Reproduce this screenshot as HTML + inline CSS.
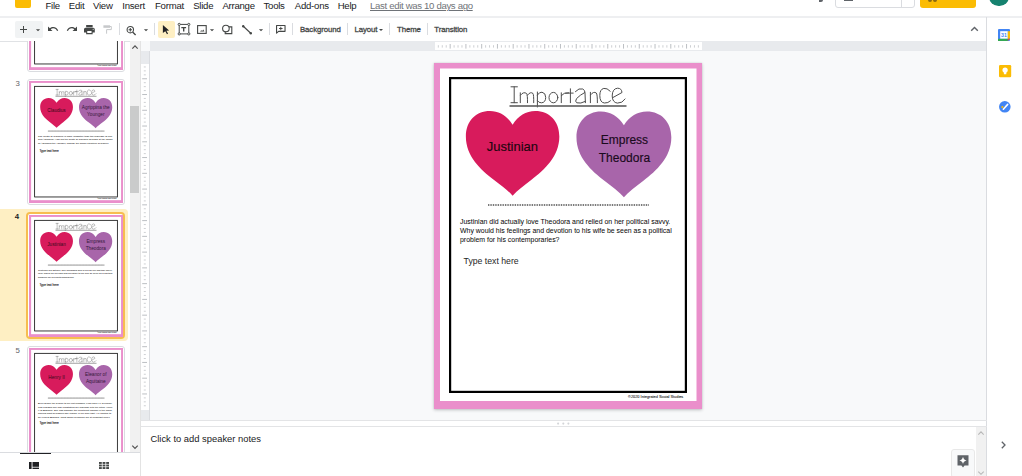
<!DOCTYPE html>
<html><head><meta charset="utf-8">
<style>
*{margin:0;padding:0;box-sizing:border-box}
html,body{width:1022px;height:476px;overflow:hidden;background:#fff;font-family:"Liberation Sans",sans-serif;position:relative}
.a{position:absolute}
.menu{position:absolute;top:1.3px;font-size:9.6px;letter-spacing:-0.25px;color:#202124;line-height:10px;white-space:nowrap}
.tb{position:absolute;font-size:7.8px;font-weight:normal;-webkit-text-stroke:0.3px #444746;color:#444746;letter-spacing:-0.1px;top:25.6px;line-height:8px;white-space:nowrap}
.sep{position:absolute;top:23px;width:1px;height:12px;background:#dadce0}
svg{position:absolute;overflow:visible}
</style></head><body>
<svg width="0" height="0" style="position:absolute;left:0;top:0">
<defs>
<path id="heart" d="M50 14.5 C44 5 36 0 26 0 C11 0 0.5 11 0.5 27 C0.5 48 16 62 30 73 C38 79.5 45 84 50 90 C55 84 62 79.5 70 73 C84 62 99.5 48 99.5 27 C99.5 11 89 0 74 0 C64 0 56 5 50 14.5 Z"/>
<g id="title" fill="none" stroke="#4d4d4d" stroke-width="1" stroke-linecap="round" stroke-linejoin="round">
<path d="M77 23.8 H83.4 M80.2 23.8 V39.7 M77 39.7 H83.4"/>
<path d="M86.3 39.7 V29.8 M86.6 32 Q89.6 28.3 92.6 30.5 Q93.6 31.5 93.5 39.7 M93.6 32 Q96.4 28.3 99 30.5 Q99.8 31.5 99.7 39.7"/>
<path d="M103.4 29 V44 M103.4 32 Q105.5 28.8 108 29.2 Q111.8 30 111.7 34.4 Q111.6 39.6 107.4 39.8 Q104.8 39.9 103.5 37.8"/>
<ellipse cx="119.4" cy="34.6" rx="4.4" ry="5.2"/>
<path d="M127.3 39.7 V29.8 M127.4 32.5 Q129.5 29.4 134.6 29.8"/>
<path d="M136.4 25.8 V39.7 M131.6 30.1 H139.2"/>
<path d="M141.4 28.6 Q145 24.6 148.8 26 Q151 27 151 30 L151.4 39.7 M150.8 29.5 Q146 32 142.6 35.5 Q140.6 38.6 142.8 39.8 Q146.5 41 151.3 38.4"/>
<path d="M156.4 39.7 V29.3 M156.6 31.8 Q159.6 28 162.3 30 Q163.4 31.2 163.4 39.7"/>
<path d="M176.2 28.2 Q173 24.8 169.8 25.4 Q165.8 26.3 165.8 32.5 Q165.8 39.6 170.5 40 Q174 40.3 176.5 37.8"/>
<path d="M178.8 34.6 L188 29.5 Q187.6 25.2 183.6 25.2 Q178.3 25.6 178.2 33 Q178.4 39.5 183.4 40.1 Q188.3 40.4 191.1 36"/>
<rect x="75.5" y="42.2" width="117" height="1.6" fill="#5e5e5e" stroke="none"/>
</g>
<g id="slidebase">
<rect x="0" y="0" width="268" height="346" fill="#ea8fcb"/>
<rect x="6" y="5.5" width="256.5" height="332.5" fill="#fff"/>
<rect x="16.1" y="15.1" width="235.8" height="313.8" fill="none" stroke="#000" stroke-width="2.2"/>
<use href="#title"/>
<use href="#heart" transform="translate(31.4 48) scale(0.944 0.942)" fill="#d81b5c"/>
<use href="#heart" transform="translate(142 48.4) scale(0.958 0.953)" fill="#a865aa"/>
<line x1="54" y1="142" x2="214.7" y2="142" stroke="#222" stroke-width="1.6" stroke-dasharray="0.8 0.9"/>
<text x="249.3" y="334.8" font-size="3.85" text-anchor="end" fill="#1a1a1a" stroke="#1a1a1a" stroke-width="0.08" font-family="Liberation Sans">©2020 Integrated Social Studies</text>
</g>
</defs>
</svg>
<!-- header -->
<div class="a" style="left:14.8px;top:-8px;width:16.5px;height:15.6px;background:#fbbc04;border-radius:2px"></div>
<div class="menu" style="left:45.5px">File</div>
<div class="menu" style="left:68.8px">Edit</div>
<div class="menu" style="left:93px">View</div>
<div class="menu" style="left:122.3px">Insert</div>
<div class="menu" style="left:155px">Format</div>
<div class="menu" style="left:193.2px">Slide</div>
<div class="menu" style="left:222.4px">Arrange</div>
<div class="menu" style="left:263.5px">Tools</div>
<div class="menu" style="left:294.8px">Add-ons</div>
<div class="menu" style="left:337.7px">Help</div>
<div class="menu" style="left:370px;color:#6f7378;text-decoration:underline;letter-spacing:-0.33px">Last edit was 10 days ago</div>

<div class="a" style="left:819px;top:-3px;width:4px;height:5px;background:#5f6368;border-radius:0 0 2px 0"></div>
<div class="a" style="left:835px;top:-5px;width:80px;height:12.5px;border:1px solid #dadce0;border-radius:3px"></div>
<div class="a" style="left:901px;top:-5px;width:1px;height:12px;background:#dadce0"></div>
<div class="a" style="left:844px;top:-2px;width:9px;height:3px;background:#5f6368"></div>
<div class="a" style="left:920px;top:-5px;width:56px;height:13px;background:#fbbc04;border-radius:3px"></div>
<div class="a" style="left:928px;top:-2.5px;width:4.3px;height:4.5px;background:#8a6a12;border-radius:0 0 2.2px 2.2px"></div><div class="a" style="left:932.8px;top:-2.5px;width:4.3px;height:4.5px;background:#8a6a12;border-radius:0 0 2.2px 2.2px"></div>
<div class="a" style="left:989.2px;top:-13.2px;width:19.6px;height:19.6px;background:#16826f;border-radius:50%"></div>

<!-- separators -->
<div class="a" style="left:0;top:16px;width:1022px;height:2px;background:#eeeff1"></div>
<div class="a" style="left:0;top:40.5px;width:986px;height:1px;background:#e0e2e5"></div>

<!-- toolbar -->
<div class="a" style="left:15px;top:21px;width:28px;height:17px;background:#f1f3f4;border-radius:2px"></div>
<div class="a" style="left:158px;top:21px;width:16.5px;height:17px;background:#feefc3;border-radius:2px"></div>
<div class="sep" style="left:119px"></div>
<div class="sep" style="left:154px"></div>
<div class="sep" style="left:269px"></div>
<div class="sep" style="left:292px"></div>
<div class="sep" style="left:347px"></div>
<div class="sep" style="left:389px"></div>
<div class="sep" style="left:427px"></div>
<div class="tb" style="left:300px">Background</div>
<div class="tb" style="left:354.6px">Layout</div>
<div class="tb" style="left:397px">Theme</div>
<div class="tb" style="left:434.3px">Transition</div>

<!-- collapse chevron -->
<svg style="left:970px;top:25px" width="9" height="8" viewBox="0 0 9 8"><path d="M1.2 5.8 L4.5 2.5 L7.8 5.8" fill="none" stroke="#5f6368" stroke-width="1.4"/></svg>

<!-- right panel -->
<div class="a" style="left:986px;top:17px;width:1px;height:459px;background:#dadce0"></div>

<!-- rulers & canvas -->
<div class="a" style="left:149px;top:41px;width:837px;height:10px;background:#e8eaed"></div>
<div class="a" style="left:435px;top:42px;width:267px;height:8.3px;background:#fff"></div>
<div class="a" style="left:140.5px;top:41px;width:9px;height:380px;background:#e8eaed"></div>
<div class="a" style="left:140.5px;top:41px;width:9px;height:9.5px;background:#f8f9fa"></div>
<div class="a" style="left:141px;top:63.5px;width:8px;height:346px;background:#fff"></div>
<div class="a" style="left:149px;top:51px;width:837px;height:369.5px;background:#f8f9fa;border-left:1px solid #dadce0"></div>
<div class="a" style="left:140.5px;top:420px;width:846px;height:1px;background:#e3e4e6"></div>
<div class="a" style="left:140.5px;top:426px;width:846px;height:1px;background:#e3e4e6"></div>

<!-- filmstrip -->
<div class="a" style="left:0;top:41px;width:130px;height:411px;overflow:hidden"><div class="a" style="left:0;top:-41px;width:130px;height:476px">
<div class="a" style="left:27px;top:-54.5px;width:98px;height:126px;border:1px solid #dadce0;border-radius:3px;background:#fff"></div>
<div class="a" style="left:15.5px;top:-54.1px;font-size:7.8px;color:#5f6368;line-height:9px">2</div>
<svg style="left:28.6px;top:-52.5px" width="94" height="122" viewBox="0 0 268 346" preserveAspectRatio="none"><use href="#slidebase"/><rect x="54" y="140.8" width="160.7" height="2.4" fill="#fff"/><rect x="54" y="141" width="160.7" height="2" fill="#888"/><g font-family="Liberation Sans" fill="#3a0a1a" font-size="13.5" text-anchor="middle"></g><g font-family="Liberation Sans" font-size="7" fill="#3a3a3a" stroke="#3a3a3a" stroke-width="0.1"></g></svg>
<div class="a" style="left:27px;top:79px;width:98px;height:126px;border:1px solid #dadce0;border-radius:3px;background:#fff"></div>
<div class="a" style="left:15.5px;top:79.4px;font-size:7.8px;color:#5f6368;line-height:9px">3</div>
<svg style="left:28.6px;top:81px" width="94" height="122" viewBox="0 0 268 346" preserveAspectRatio="none"><use href="#slidebase"/><rect x="54" y="140.8" width="160.7" height="2.4" fill="#fff"/><rect x="54" y="141" width="160.7" height="2" fill="#888"/><g font-family="Liberation Sans" fill="#3a0a1a" font-size="13.5" text-anchor="middle"><text x="78.4" y="88.5">Claudius</text><text x="190.4" y="78.5" fill="#35183a">Agrippina the</text><text x="190.4" y="98.5" fill="#35183a">Younger</text></g><g font-family="Liberation Sans" font-size="7" fill="#3a3a3a" stroke="#3a3a3a" stroke-width="0.1"><text x="26" y="159.5" textLength="211.2" lengthAdjust="spacingAndGlyphs">The death of Claudius is more impactful than the marriage of him</text><text x="26" y="168.5" textLength="212" lengthAdjust="spacingAndGlyphs">and Agrippina. How did the death of Claudius perhaps at the hands</text><text x="26" y="177.5" textLength="201.29999999999998" lengthAdjust="spacingAndGlyphs">of Agrippina the Younger, change the power structure of Rome?</text></g><text x="29.6" y="201.5" font-family="Liberation Sans" font-size="8.7" fill="#222" stroke="#222" stroke-width="0.3">Type text here</text></svg>
<div class="a" style="left:0;top:209.0px;width:128px;height:132px;background:#feefc3;border-radius:0 4px 4px 0"></div>
<div class="a" style="left:26px;top:212.0px;width:99px;height:127px;border:2px solid #f7bd4f;border-radius:4px;background:#fff"></div>
<div class="a" style="left:14.8px;top:211.9px;font-size:7.8px;font-weight:bold;color:#202124;line-height:9px">4</div>
<svg style="left:28.6px;top:214.5px" width="94" height="122" viewBox="0 0 268 346" preserveAspectRatio="none"><use href="#slidebase"/><rect x="54" y="140.8" width="160.7" height="2.4" fill="#fff"/><rect x="54" y="141" width="160.7" height="2" fill="#888"/><g font-family="Liberation Sans" fill="#3a0a1a" font-size="13.5" text-anchor="middle"><text x="78.4" y="88.5">Justinian</text><text x="190.4" y="78.5" fill="#35183a">Empress</text><text x="190.4" y="98.5" fill="#35183a">Theodora</text></g><g font-family="Liberation Sans" font-size="7" fill="#3a3a3a" stroke="#3a3a3a" stroke-width="0.1"><text x="26" y="159.5" textLength="212" lengthAdjust="spacingAndGlyphs">Justinian did actually love Theodora and relied on her political savvy.</text><text x="26" y="168.5" textLength="212" lengthAdjust="spacingAndGlyphs">Why would his feelings and devotion to his wife be seen as a political</text><text x="26" y="177.5" textLength="102.3" lengthAdjust="spacingAndGlyphs">problem for his contemporaries?</text></g><text x="29.6" y="200" font-family="Liberation Sans" font-size="8.7" fill="#222" stroke="#222" stroke-width="0.3">Type text here</text></svg>
<div class="a" style="left:27px;top:346px;width:98px;height:126px;border:1px solid #dadce0;border-radius:3px;background:#fff"></div>
<div class="a" style="left:15.5px;top:346.4px;font-size:7.8px;color:#5f6368;line-height:9px">5</div>
<svg style="left:28.6px;top:348px" width="94" height="122" viewBox="0 0 268 346" preserveAspectRatio="none"><use href="#slidebase"/><rect x="54" y="140.8" width="160.7" height="2.4" fill="#fff"/><rect x="54" y="141" width="160.7" height="2" fill="#888"/><g font-family="Liberation Sans" fill="#3a0a1a" font-size="13.5" text-anchor="middle"><text x="78.4" y="88.5">Henry II</text><text x="190.4" y="78.5" fill="#35183a">Eleanor of</text><text x="190.4" y="98.5" fill="#35183a">Aquitaine</text></g><g font-family="Liberation Sans" font-size="7" fill="#3a3a3a" stroke="#3a3a3a" stroke-width="0.1"><text x="26" y="159.5" textLength="212" lengthAdjust="spacingAndGlyphs">Even before the divorce to her first husband, King Louis VII of France,</text><text x="26" y="169.0" textLength="212" lengthAdjust="spacingAndGlyphs">was finalized she was negotiating her marriage with the future Henry</text><text x="26" y="178.5" textLength="212" lengthAdjust="spacingAndGlyphs">II of England. She was possibly the wealthiest woman in the world,</text><text x="26" y="188.0" textLength="207.89999999999998" lengthAdjust="spacingAndGlyphs">owning most of modern day France in her own right. He wanted to</text><text x="26" y="197.5" textLength="204.6" lengthAdjust="spacingAndGlyphs">be King of England. What power dynamics are at important here?</text></g><text x="29.6" y="215" font-family="Liberation Sans" font-size="8.7" fill="#222" stroke="#222" stroke-width="0.3">Type text here</text></svg>
</div></div>
<div class="a" style="left:140px;top:41px;width:1px;height:435px;background:#e3e3e3"></div>
<div class="a" style="left:130px;top:41px;width:10px;height:411px;background:#f1f1f1"></div>
<div class="a" style="left:130px;top:106px;width:8.7px;height:86.5px;background:#cacbcb"></div>
<div class="a" style="left:0;top:452px;width:140px;height:1px;background:#dadce0"></div>
<div class="a" style="left:20px;top:452.6px;width:30.5px;height:1.7px;background:#202124"></div>
<!-- main slide -->
<div class="a" style="left:434px;top:63px;width:268px;height:346px;box-shadow:0 1px 3px 0 rgba(60,64,67,.3),0 0 1px rgba(60,64,67,.2)"></div>
<svg style="left:434px;top:63px" width="268" height="346" viewBox="0 0 268 346">
<use href="#slidebase"/>
<g font-family="Liberation Sans">
<text x="78.4" y="88.3" font-size="13" text-anchor="middle" fill="#1e0610" stroke="#1e0610" stroke-width="0.15">Justinian</text>
<text x="190.4" y="80.5" font-size="12" text-anchor="middle" fill="#1a0a1c" stroke="#1a0a1c" stroke-width="0.15">Empress</text>
<text x="190.4" y="98.5" font-size="12" text-anchor="middle" fill="#1a0a1c" stroke="#1a0a1c" stroke-width="0.15">Theodora</text>
</g>
<g font-family="Liberation Sans" font-size="6.95" fill="#0d0d0d" stroke="#0d0d0d" stroke-width="0.04">
<text x="26" y="160.8">Justinian did actually love Theodora and relied on her political savvy.</text>
<text x="26" y="169.8">Why would his feelings and devotion to his wife be seen as a political</text>
<text x="26" y="178.8">problem for his contemporaries?</text>
</g>
<text x="29.6" y="200.8" font-family="Liberation Sans" font-size="8.7" fill="#262626">Type text here</text>
</svg>
<!-- speaker notes -->
<div class="a" style="left:150.5px;top:434px;font-size:9.4px;color:#202124;white-space:nowrap;line-height:10px">Click to add speaker notes</div>
<!-- toolbar icons -->
<div class="a" style="left:20px;top:29px;width:7px;height:1.1px;background:#444746"></div><div class="a" style="left:23px;top:26px;width:1.1px;height:7px;background:#444746"></div>
<svg style="left:33px;top:25px" width="10" height="10" viewBox="0 0 24 24"><path d="M7 10l5 5 5-5z" fill="#444746"/></svg>
<svg style="left:47px;top:23px" width="12" height="12" viewBox="0 0 24 24"><path d="M12.5 8c-2.65 0-5.05.99-6.9 2.6L2 7v9h9l-3.62-3.62c1.39-1.16 3.16-1.88 5.12-1.88 3.54 0 6.55 2.31 7.6 5.5l2.37-.78C21.08 11.03 17.15 8 12.5 8z" fill="#444746"/></svg>
<svg style="left:65.5px;top:23px" width="12" height="12" viewBox="0 0 24 24"><path d="M18.4 10.6C16.55 8.99 14.15 8 11.5 8c-4.65 0-8.58 3.03-9.96 7.22L3.9 16c1.05-3.19 4.05-5.5 7.6-5.5 1.95 0 3.73.72 5.12 1.88L13 16h9V7l-3.6 3.6z" fill="#444746"/></svg>
<svg style="left:84px;top:24.8px" width="10.8" height="9.2" viewBox="2 3 20 17"><path d="M19 8H5c-1.66 0-3 1.34-3 3v6h4v3h12v-3h4v-6c0-1.66-1.34-3-3-3zm-3 10H8v-4h8v4zm3-6c-.55 0-1-.45-1-1s.45-1 1-1 1 .45 1 1-.45 1-1 1zm-1-9H6v4h12V3z" fill="#444746"/></svg>
<svg style="left:0;top:0" width="1" height="1" viewBox="0 0 1 1"><rect x="103.4" y="25.3" width="6.6" height="2.5" fill="#c6c8ca"/><path d="M110 26.5 H111.3 V29.6 H106.6 V33.7" fill="none" stroke="#c6c8ca" stroke-width="1"/></svg>
<svg style="left:126px;top:25.5px" width="11" height="9" viewBox="0 0 11 9"><g fill="none" stroke="#444746" stroke-width="1.1"><circle cx="4.3" cy="3.7" r="3.2"/><path d="M6.6 6 L9.6 9" stroke-width="1.4"/><path d="M4.3 2 V5.4 M2.6 3.7 H6"/></g></svg>
<svg style="left:141px;top:25px" width="10" height="10" viewBox="0 0 24 24"><path d="M7 10l5 5 5-5z" fill="#444746"/></svg>
<svg style="left:161px;top:24.3px" width="10" height="10" viewBox="0 0 24 24"><path d="M4.5 2.5 L19.5 15.5 L12.8 15.9 L17 23 L14.4 24.3 L10.3 17.2 L4.5 21.8 Z" fill="#202124"/></svg>
<svg style="left:0;top:0" width="1" height="1" viewBox="0 0 1 1"><rect x="179.2" y="24.4" width="9.6" height="9.5" fill="none" stroke="#444746" stroke-width="1"/><g fill="#fff" stroke="#444746" stroke-width="0.9"><circle cx="179.2" cy="24.4" r="1.1"/><circle cx="188.8" cy="24.4" r="1.1"/><circle cx="179.2" cy="33.9" r="1.1"/><circle cx="188.8" cy="33.9" r="1.1"/></g><path d="M181.3 27.1h4.8v1.1h-1.7v3.4h-1.4v-3.4h-1.7z" fill="#444746"/></svg>
<svg style="left:196.5px;top:25px" width="10" height="9" viewBox="0 0 10 9"><rect x="0.6" y="0.6" width="8.6" height="7.8" fill="none" stroke="#444746" stroke-width="1.1"/><path d="M3 6.6 L4.3 5.2 L5.2 6 L6.3 4.6 L7.4 6.6Z" fill="#444746"/></svg>
<svg style="left:207px;top:25px" width="10" height="10" viewBox="0 0 24 24"><path d="M7 10l5 5 5-5z" fill="#444746"/></svg>
<svg style="left:0;top:0" width="1" height="1" viewBox="0 0 1 1"><g stroke="#444746" stroke-width="1.1" fill="none"><path d="M228.8 26.9 H231.8 V33.6 H225.2 V31.6"/><circle cx="225.9" cy="28.6" r="3.3"/></g></svg>
<svg style="left:241.5px;top:24.5px" width="10" height="9.5" viewBox="0 0 10 9.5"><g fill="#444746"><path d="M1 1 L9 8.5" stroke="#444746" stroke-width="1.1"/><circle cx="1.2" cy="1.2" r="1.2"/><circle cx="8.8" cy="8.3" r="1.2"/></g></svg>
<svg style="left:256px;top:25px" width="10" height="10" viewBox="0 0 24 24"><path d="M7 10l5 5 5-5z" fill="#444746"/></svg>
<svg style="left:276.3px;top:25.2px" width="9.6" height="8.5" viewBox="0 0 9.6 8.5"><path d="M0.55 0.55h8.5v5.8H2.6L0.55 8.1z" fill="none" stroke="#444746" stroke-width="1.1" stroke-linejoin="round"/><path d="M4.35 1.8h0.9v1.3h1.3v0.9H5.25v1.3h-0.9V4H3.05V3.1h1.3z" fill="#444746"/></svg>
<svg style="left:376.8px;top:25.8px" width="8" height="8" viewBox="0 0 24 24"><path d="M6 9l6 6 6-6z" fill="#444746"/></svg>
<!-- filmstrip scroll arrows -->
<svg style="left:131px;top:44px" width="8" height="6" viewBox="0 0 8 6"><path d="M1.3 4.6 L4 1.9 L6.7 4.6" fill="none" stroke="#505050" stroke-width="1.2"/></svg>
<svg style="left:131px;top:444px" width="8" height="6" viewBox="0 0 8 6"><path d="M1.3 1.6 L4 4.3 L6.7 1.6" fill="none" stroke="#505050" stroke-width="1.2"/></svg>
<!-- bottom view tabs -->
<svg style="left:29px;top:461.8px" width="10" height="7" viewBox="0 0 10 7"><g fill="#202124"><rect x="0" y="0" width="2.6" height="7"/><rect x="3.5" y="0" width="6.5" height="4.8"/><rect x="3.5" y="5.6" width="6.5" height="1.4"/></g></svg>
<svg style="left:98.5px;top:461.8px" width="10" height="7" viewBox="0 0 10 7"><g fill="#444746"><rect x="0" y="0" width="2.8" height="1.9"/><rect x="3.6" y="0" width="2.8" height="1.9"/><rect x="7.2" y="0" width="2.8" height="1.9"/><rect x="0" y="2.55" width="2.8" height="1.9"/><rect x="3.6" y="2.55" width="2.8" height="1.9"/><rect x="7.2" y="2.55" width="2.8" height="1.9"/><rect x="0" y="5.1" width="2.8" height="1.9"/><rect x="3.6" y="5.1" width="2.8" height="1.9"/><rect x="7.2" y="5.1" width="2.8" height="1.9"/></g></svg>
<!-- notes chrome -->
<div class="a" style="left:976px;top:427px;width:10px;height:49px;background:#f1f1f1"></div>
<svg style="left:977px;top:429.5px" width="8" height="6" viewBox="0 0 8 6"><path d="M1.3 4.6 L4 1.9 L6.7 4.6" fill="none" stroke="#b8b8b8" stroke-width="1.1"/></svg>
<svg style="left:977px;top:470px" width="8" height="6" viewBox="0 0 8 6"><path d="M1.3 1.6 L4 4.3 L6.7 1.6" fill="none" stroke="#b8b8b8" stroke-width="1.1"/></svg>
<div class="a" style="left:950.8px;top:448.8px;width:24px;height:29px;background:#f8f9fa;border:1px solid #e8e8e8;border-radius:3px"></div>
<svg style="left:957.3px;top:455px" width="12" height="13" viewBox="0 0 12 13"><path d="M0.5 0.3h11v10.2H7.6L6 12.6 4.4 10.5H0.5z" fill="#5f6368"/><path d="M6 1.8 Q6.5 4.8 9.6 5.4 Q6.5 6 6 9 Q5.5 6 2.4 5.4 Q5.5 4.8 6 1.8z" fill="#fff"/></svg>
<svg style="left:1000.4px;top:441px" width="7" height="8" viewBox="0 0 7 8"><path d="M1.8 0.8 L5 4 L1.8 7.2" fill="none" stroke="#5f6368" stroke-width="1.3"/></svg>
<!-- canvas resize dots -->
<svg style="left:0;top:0" width="1" height="1" viewBox="0 0 1 1"><g fill="#d3d5d8"><circle cx="558.1" cy="423.6" r="1.05"/><circle cx="563.3" cy="423.6" r="1.05"/><circle cx="568.4" cy="423.6" r="1.05"/></g></svg>
<!-- right panel icons -->
<svg style="left:998.2px;top:28.6px" width="12" height="12" viewBox="0 0 12 12">
<rect x="0" y="0" width="12" height="12" rx="1" fill="#4285f4"/>
<rect x="2.2" y="2.2" width="7.6" height="7.6" fill="#fff"/>
<rect x="9.8" y="2.2" width="2.2" height="7.6" fill="#fbbc04"/>
<rect x="0" y="9.8" width="9.8" height="2.2" fill="#34a853"/>
<path d="M9.8 9.8h2.2L9.8 12z" fill="#ea4335"/>
<text x="6" y="8" font-size="5.2" text-anchor="middle" fill="#4285f4" font-family="Liberation Sans" font-weight="bold">31</text>
</svg>
<svg style="left:998.7px;top:64.6px" width="12.2" height="12.2" viewBox="0 0 12 12">
<rect x="0" y="0" width="12" height="12" rx="1.2" fill="#fbbc04"/>
<circle cx="6" cy="5" r="2.6" fill="#fff"/><rect x="4.8" y="6.5" width="2.4" height="2.6" fill="#fff"/>
</svg>
<svg style="left:999px;top:101px" width="11.6" height="11.6" viewBox="0 0 12 12">
<circle cx="6" cy="6" r="6" fill="#4285f4"/>
<path d="M4.5 8.5 L9 3.5" stroke="#fff" stroke-width="1.6" stroke-linecap="round"/>
<circle cx="3.5" cy="6.3" r="1.1" fill="#fbbc04"/>
</svg>
<!-- header partial icons -->
<div class="a" style="left:998.3px;top:-1px;width:1.6px;height:1.4px;border-radius:1px;background:#fff;opacity:.85"></div>
<div class="a" style="left:1001.3px;top:-1px;width:1.6px;height:1.4px;border-radius:1px;background:#fff;opacity:.85"></div>
<div class="a" style="left:995.3px;top:-1px;width:1.6px;height:1.4px;border-radius:1px;background:#fff;opacity:.85"></div>
<!-- rulers ticks -->
<svg style="left:0;top:0" width="1022" height="476" viewBox="0 0 1022 476"><g stroke="#b4b8bc" stroke-width="0.9"><line x1="438.34" y1="45.2" x2="438.34" y2="47.6" stroke="#c8cbce"/><line x1="442.28" y1="45.2" x2="442.28" y2="47.6" stroke="#c8cbce"/><line x1="446.22" y1="45.2" x2="446.22" y2="47.6" stroke="#c8cbce"/><line x1="450.16" y1="44" x2="450.16" y2="48.6"/><line x1="454.10" y1="45.2" x2="454.10" y2="47.6" stroke="#c8cbce"/><line x1="458.04" y1="45.2" x2="458.04" y2="47.6" stroke="#c8cbce"/><line x1="461.98" y1="45.2" x2="461.98" y2="47.6" stroke="#c8cbce"/><line x1="465.92" y1="44" x2="465.92" y2="48.6"/><line x1="469.86" y1="45.2" x2="469.86" y2="47.6" stroke="#c8cbce"/><line x1="473.80" y1="45.2" x2="473.80" y2="47.6" stroke="#c8cbce"/><line x1="477.74" y1="45.2" x2="477.74" y2="47.6" stroke="#c8cbce"/><line x1="481.68" y1="44" x2="481.68" y2="48.6"/><line x1="485.62" y1="45.2" x2="485.62" y2="47.6" stroke="#c8cbce"/><line x1="489.56" y1="45.2" x2="489.56" y2="47.6" stroke="#c8cbce"/><line x1="493.50" y1="45.2" x2="493.50" y2="47.6" stroke="#c8cbce"/><line x1="497.44" y1="44" x2="497.44" y2="48.6"/><line x1="501.38" y1="45.2" x2="501.38" y2="47.6" stroke="#c8cbce"/><line x1="505.32" y1="45.2" x2="505.32" y2="47.6" stroke="#c8cbce"/><line x1="509.26" y1="45.2" x2="509.26" y2="47.6" stroke="#c8cbce"/><line x1="513.20" y1="44" x2="513.20" y2="48.6"/><line x1="517.14" y1="45.2" x2="517.14" y2="47.6" stroke="#c8cbce"/><line x1="521.08" y1="45.2" x2="521.08" y2="47.6" stroke="#c8cbce"/><line x1="525.02" y1="45.2" x2="525.02" y2="47.6" stroke="#c8cbce"/><line x1="528.96" y1="44" x2="528.96" y2="48.6"/><line x1="532.90" y1="45.2" x2="532.90" y2="47.6" stroke="#c8cbce"/><line x1="536.84" y1="45.2" x2="536.84" y2="47.6" stroke="#c8cbce"/><line x1="540.78" y1="45.2" x2="540.78" y2="47.6" stroke="#c8cbce"/><line x1="544.72" y1="44" x2="544.72" y2="48.6"/><line x1="548.66" y1="45.2" x2="548.66" y2="47.6" stroke="#c8cbce"/><line x1="552.60" y1="45.2" x2="552.60" y2="47.6" stroke="#c8cbce"/><line x1="556.54" y1="45.2" x2="556.54" y2="47.6" stroke="#c8cbce"/><line x1="560.48" y1="44" x2="560.48" y2="48.6"/><line x1="564.42" y1="45.2" x2="564.42" y2="47.6" stroke="#c8cbce"/><line x1="568.36" y1="45.2" x2="568.36" y2="47.6" stroke="#c8cbce"/><line x1="572.30" y1="45.2" x2="572.30" y2="47.6" stroke="#c8cbce"/><line x1="576.24" y1="44" x2="576.24" y2="48.6"/><line x1="580.18" y1="45.2" x2="580.18" y2="47.6" stroke="#c8cbce"/><line x1="584.12" y1="45.2" x2="584.12" y2="47.6" stroke="#c8cbce"/><line x1="588.06" y1="45.2" x2="588.06" y2="47.6" stroke="#c8cbce"/><line x1="592.00" y1="44" x2="592.00" y2="48.6"/><line x1="595.94" y1="45.2" x2="595.94" y2="47.6" stroke="#c8cbce"/><line x1="599.88" y1="45.2" x2="599.88" y2="47.6" stroke="#c8cbce"/><line x1="603.82" y1="45.2" x2="603.82" y2="47.6" stroke="#c8cbce"/><line x1="607.76" y1="44" x2="607.76" y2="48.6"/><line x1="611.70" y1="45.2" x2="611.70" y2="47.6" stroke="#c8cbce"/><line x1="615.64" y1="45.2" x2="615.64" y2="47.6" stroke="#c8cbce"/><line x1="619.58" y1="45.2" x2="619.58" y2="47.6" stroke="#c8cbce"/><line x1="623.52" y1="44" x2="623.52" y2="48.6"/><line x1="627.46" y1="45.2" x2="627.46" y2="47.6" stroke="#c8cbce"/><line x1="631.40" y1="45.2" x2="631.40" y2="47.6" stroke="#c8cbce"/><line x1="635.34" y1="45.2" x2="635.34" y2="47.6" stroke="#c8cbce"/><line x1="639.28" y1="44" x2="639.28" y2="48.6"/><line x1="643.22" y1="45.2" x2="643.22" y2="47.6" stroke="#c8cbce"/><line x1="647.16" y1="45.2" x2="647.16" y2="47.6" stroke="#c8cbce"/><line x1="651.10" y1="45.2" x2="651.10" y2="47.6" stroke="#c8cbce"/><line x1="655.04" y1="44" x2="655.04" y2="48.6"/><line x1="658.98" y1="45.2" x2="658.98" y2="47.6" stroke="#c8cbce"/><line x1="662.92" y1="45.2" x2="662.92" y2="47.6" stroke="#c8cbce"/><line x1="666.86" y1="45.2" x2="666.86" y2="47.6" stroke="#c8cbce"/><line x1="670.80" y1="44" x2="670.80" y2="48.6"/><line x1="674.74" y1="45.2" x2="674.74" y2="47.6" stroke="#c8cbce"/><line x1="678.68" y1="45.2" x2="678.68" y2="47.6" stroke="#c8cbce"/><line x1="682.62" y1="45.2" x2="682.62" y2="47.6" stroke="#c8cbce"/><line x1="686.56" y1="44" x2="686.56" y2="48.6"/><line x1="690.50" y1="45.2" x2="690.50" y2="47.6" stroke="#c8cbce"/><line x1="694.44" y1="45.2" x2="694.44" y2="47.6" stroke="#c8cbce"/><line x1="698.38" y1="45.2" x2="698.38" y2="47.6" stroke="#c8cbce"/><line x1="143.8" y1="66.94" x2="145.8" y2="66.94" stroke="#c8cbce"/><line x1="143.8" y1="70.88" x2="145.8" y2="70.88" stroke="#c8cbce"/><line x1="143.8" y1="74.82" x2="145.8" y2="74.82" stroke="#c8cbce"/><line x1="142.2" y1="78.76" x2="147" y2="78.76"/><line x1="143.8" y1="82.70" x2="145.8" y2="82.70" stroke="#c8cbce"/><line x1="143.8" y1="86.64" x2="145.8" y2="86.64" stroke="#c8cbce"/><line x1="143.8" y1="90.58" x2="145.8" y2="90.58" stroke="#c8cbce"/><line x1="142.2" y1="94.52" x2="147" y2="94.52"/><line x1="143.8" y1="98.46" x2="145.8" y2="98.46" stroke="#c8cbce"/><line x1="143.8" y1="102.40" x2="145.8" y2="102.40" stroke="#c8cbce"/><line x1="143.8" y1="106.34" x2="145.8" y2="106.34" stroke="#c8cbce"/><line x1="142.2" y1="110.28" x2="147" y2="110.28"/><line x1="143.8" y1="114.22" x2="145.8" y2="114.22" stroke="#c8cbce"/><line x1="143.8" y1="118.16" x2="145.8" y2="118.16" stroke="#c8cbce"/><line x1="143.8" y1="122.10" x2="145.8" y2="122.10" stroke="#c8cbce"/><line x1="142.2" y1="126.04" x2="147" y2="126.04"/><line x1="143.8" y1="129.98" x2="145.8" y2="129.98" stroke="#c8cbce"/><line x1="143.8" y1="133.92" x2="145.8" y2="133.92" stroke="#c8cbce"/><line x1="143.8" y1="137.86" x2="145.8" y2="137.86" stroke="#c8cbce"/><line x1="142.2" y1="141.80" x2="147" y2="141.80"/><line x1="143.8" y1="145.74" x2="145.8" y2="145.74" stroke="#c8cbce"/><line x1="143.8" y1="149.68" x2="145.8" y2="149.68" stroke="#c8cbce"/><line x1="143.8" y1="153.62" x2="145.8" y2="153.62" stroke="#c8cbce"/><line x1="142.2" y1="157.56" x2="147" y2="157.56"/><line x1="143.8" y1="161.50" x2="145.8" y2="161.50" stroke="#c8cbce"/><line x1="143.8" y1="165.44" x2="145.8" y2="165.44" stroke="#c8cbce"/><line x1="143.8" y1="169.38" x2="145.8" y2="169.38" stroke="#c8cbce"/><line x1="142.2" y1="173.32" x2="147" y2="173.32"/><line x1="143.8" y1="177.26" x2="145.8" y2="177.26" stroke="#c8cbce"/><line x1="143.8" y1="181.20" x2="145.8" y2="181.20" stroke="#c8cbce"/><line x1="143.8" y1="185.14" x2="145.8" y2="185.14" stroke="#c8cbce"/><line x1="142.2" y1="189.08" x2="147" y2="189.08"/><line x1="143.8" y1="193.02" x2="145.8" y2="193.02" stroke="#c8cbce"/><line x1="143.8" y1="196.96" x2="145.8" y2="196.96" stroke="#c8cbce"/><line x1="143.8" y1="200.90" x2="145.8" y2="200.90" stroke="#c8cbce"/><line x1="142.2" y1="204.84" x2="147" y2="204.84"/><line x1="143.8" y1="208.78" x2="145.8" y2="208.78" stroke="#c8cbce"/><line x1="143.8" y1="212.72" x2="145.8" y2="212.72" stroke="#c8cbce"/><line x1="143.8" y1="216.66" x2="145.8" y2="216.66" stroke="#c8cbce"/><line x1="142.2" y1="220.60" x2="147" y2="220.60"/><line x1="143.8" y1="224.54" x2="145.8" y2="224.54" stroke="#c8cbce"/><line x1="143.8" y1="228.48" x2="145.8" y2="228.48" stroke="#c8cbce"/><line x1="143.8" y1="232.42" x2="145.8" y2="232.42" stroke="#c8cbce"/><line x1="142.2" y1="236.36" x2="147" y2="236.36"/><line x1="143.8" y1="240.30" x2="145.8" y2="240.30" stroke="#c8cbce"/><line x1="143.8" y1="244.24" x2="145.8" y2="244.24" stroke="#c8cbce"/><line x1="143.8" y1="248.18" x2="145.8" y2="248.18" stroke="#c8cbce"/><line x1="142.2" y1="252.12" x2="147" y2="252.12"/><line x1="143.8" y1="256.06" x2="145.8" y2="256.06" stroke="#c8cbce"/><line x1="143.8" y1="260.00" x2="145.8" y2="260.00" stroke="#c8cbce"/><line x1="143.8" y1="263.94" x2="145.8" y2="263.94" stroke="#c8cbce"/><line x1="142.2" y1="267.88" x2="147" y2="267.88"/><line x1="143.8" y1="271.82" x2="145.8" y2="271.82" stroke="#c8cbce"/><line x1="143.8" y1="275.76" x2="145.8" y2="275.76" stroke="#c8cbce"/><line x1="143.8" y1="279.70" x2="145.8" y2="279.70" stroke="#c8cbce"/><line x1="142.2" y1="283.64" x2="147" y2="283.64"/><line x1="143.8" y1="287.58" x2="145.8" y2="287.58" stroke="#c8cbce"/><line x1="143.8" y1="291.52" x2="145.8" y2="291.52" stroke="#c8cbce"/><line x1="143.8" y1="295.46" x2="145.8" y2="295.46" stroke="#c8cbce"/><line x1="142.2" y1="299.40" x2="147" y2="299.40"/><line x1="143.8" y1="303.34" x2="145.8" y2="303.34" stroke="#c8cbce"/><line x1="143.8" y1="307.28" x2="145.8" y2="307.28" stroke="#c8cbce"/><line x1="143.8" y1="311.22" x2="145.8" y2="311.22" stroke="#c8cbce"/><line x1="142.2" y1="315.16" x2="147" y2="315.16"/><line x1="143.8" y1="319.10" x2="145.8" y2="319.10" stroke="#c8cbce"/><line x1="143.8" y1="323.04" x2="145.8" y2="323.04" stroke="#c8cbce"/><line x1="143.8" y1="326.98" x2="145.8" y2="326.98" stroke="#c8cbce"/><line x1="142.2" y1="330.92" x2="147" y2="330.92"/><line x1="143.8" y1="334.86" x2="145.8" y2="334.86" stroke="#c8cbce"/><line x1="143.8" y1="338.80" x2="145.8" y2="338.80" stroke="#c8cbce"/><line x1="143.8" y1="342.74" x2="145.8" y2="342.74" stroke="#c8cbce"/><line x1="142.2" y1="346.68" x2="147" y2="346.68"/><line x1="143.8" y1="350.62" x2="145.8" y2="350.62" stroke="#c8cbce"/><line x1="143.8" y1="354.56" x2="145.8" y2="354.56" stroke="#c8cbce"/><line x1="143.8" y1="358.50" x2="145.8" y2="358.50" stroke="#c8cbce"/><line x1="142.2" y1="362.44" x2="147" y2="362.44"/><line x1="143.8" y1="366.38" x2="145.8" y2="366.38" stroke="#c8cbce"/><line x1="143.8" y1="370.32" x2="145.8" y2="370.32" stroke="#c8cbce"/><line x1="143.8" y1="374.26" x2="145.8" y2="374.26" stroke="#c8cbce"/><line x1="142.2" y1="378.20" x2="147" y2="378.20"/><line x1="143.8" y1="382.14" x2="145.8" y2="382.14" stroke="#c8cbce"/><line x1="143.8" y1="386.08" x2="145.8" y2="386.08" stroke="#c8cbce"/><line x1="143.8" y1="390.02" x2="145.8" y2="390.02" stroke="#c8cbce"/><line x1="142.2" y1="393.96" x2="147" y2="393.96"/><line x1="143.8" y1="397.90" x2="145.8" y2="397.90" stroke="#c8cbce"/><line x1="143.8" y1="401.84" x2="145.8" y2="401.84" stroke="#c8cbce"/><line x1="143.8" y1="405.78" x2="145.8" y2="405.78" stroke="#c8cbce"/></g></svg>
</body></html>
